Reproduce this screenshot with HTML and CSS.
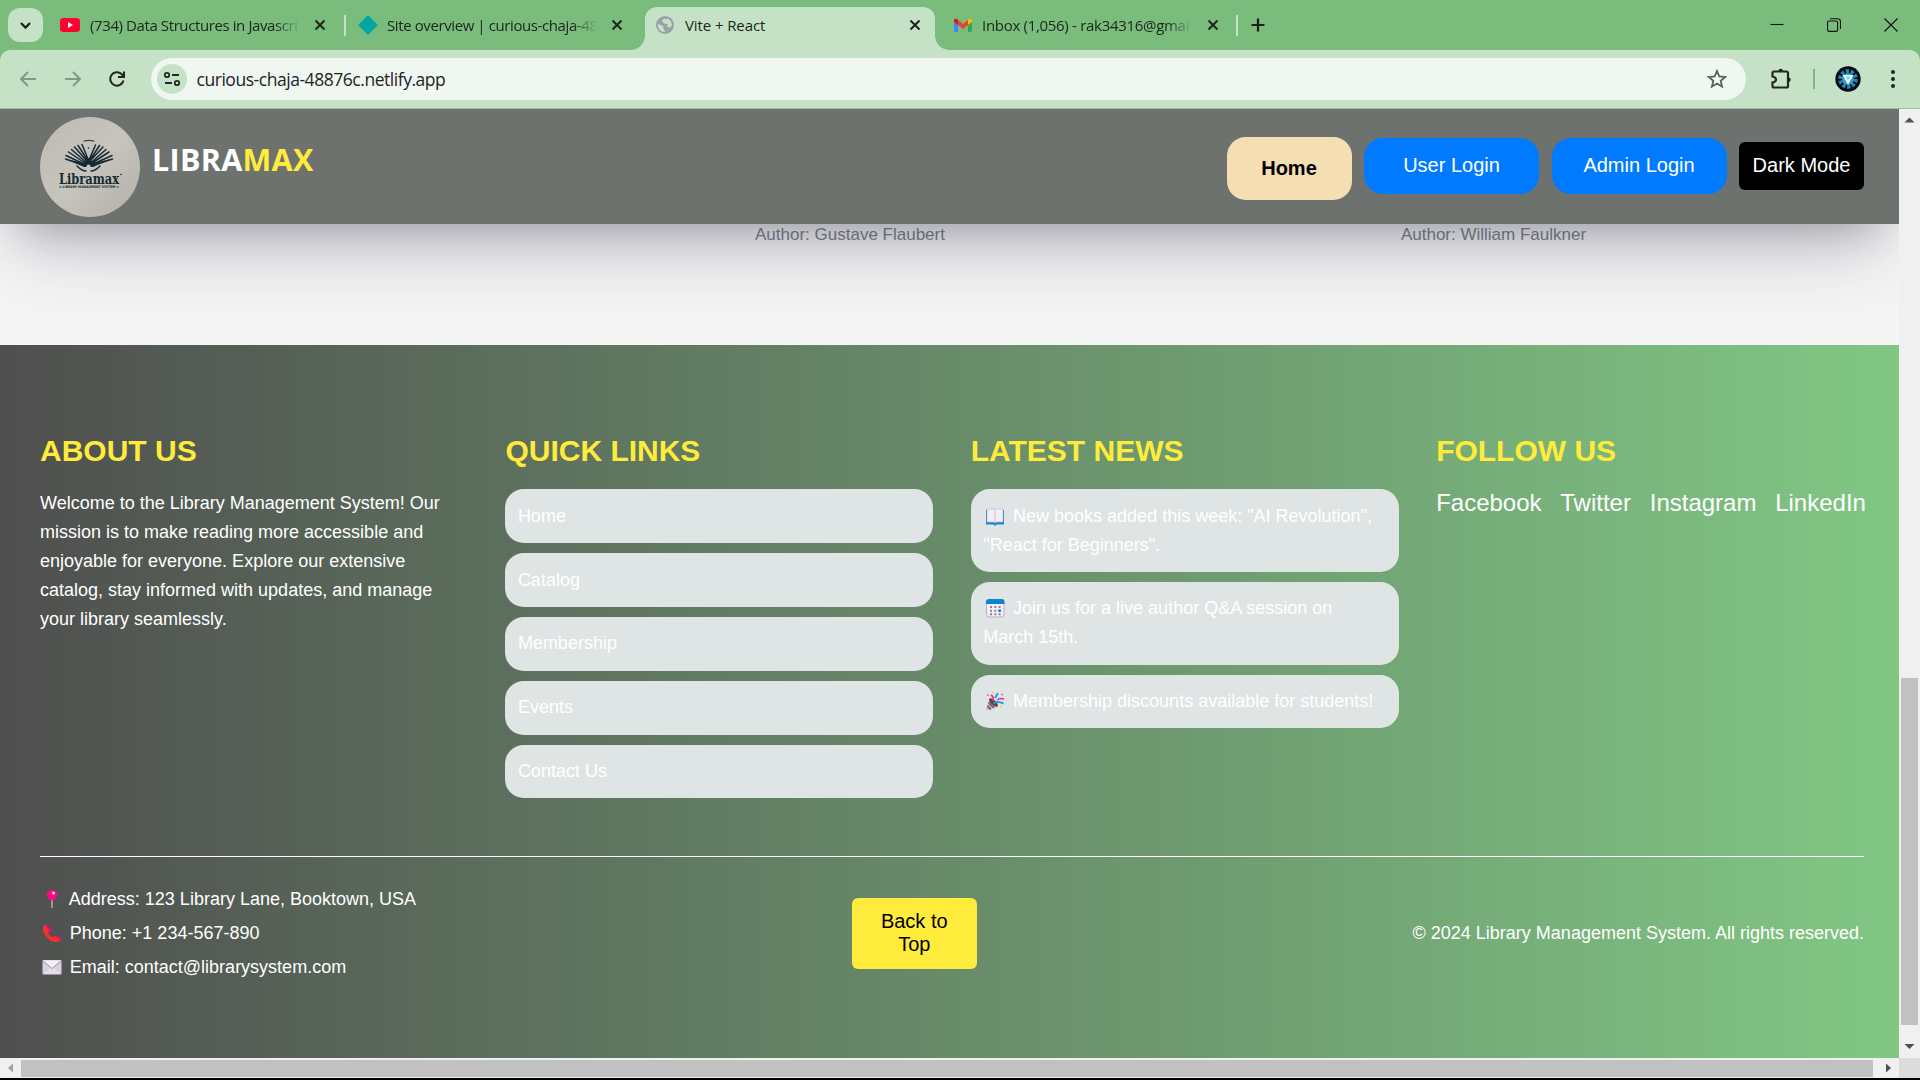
FILE: index.html
```html
<!DOCTYPE html>
<html lang="en">
<head>
<meta charset="utf-8">
<title>Vite + React</title>
<link rel="stylesheet" href="styles.css">
</head>
<body>
<div class="tabstrip">
  <div class="tab-search"><svg width="35" height="34" viewBox="0 0 35 34"><path d="M13 15l4.5 4.500 4.500-4.500" fill="none" stroke="#1d1f1d" stroke-width="2.300"/></svg></div>
  <div class="tab tab-video">
    <svg class="fav" width="20" height="14" viewBox="0 0 20 14"><rect width="20" height="14" rx="3.500" fill="#ff0033"/><path d="M8 4l5 3-5 3z" fill="#fff"/></svg>
    <span class="tab-title fade t1">(734) Data Structures in Javascri</span>
    <svg class="x" width="12" height="12" viewBox="0 0 12 12"><path d="M1.500 1.500l9 9m0-9l-9 9"/></svg>
  </div>
  <div class="tab tab-site">
    <svg class="fav" width="20" height="20" viewBox="0 0 20 20"><path d="M9 1q1-1 2 0l8 8q1 1 0 2l-8 8q-1 1-2 0l-8-8q-1-1 0-2z" fill="#05a5a1"/></svg>
    <span class="tab-title fade t2">Site overview | curious-chaja-48</span>
    <svg class="x" width="12" height="12" viewBox="0 0 12 12"><path d="M1.500 1.500l9 9m0-9l-9 9"/></svg>
  </div>
  <div class="tab tab-active">
    <svg class="fav" width="18" height="18" viewBox="0 0 18 18"><circle cx="9" cy="9" r="9" fill="#9aa0a6"/><path d="M2 8l5 2 .500 3 2 3q-6 .500-7.500-6zM8 2l-2 3 2 2.500 4 .500-1 3 3 .500 2-2q-.500-5-4-7l-2 1z" fill="#c5e2c6"/></svg>
    <span class="tab-title">Vite + React</span>
    <svg class="x" width="12" height="12" viewBox="0 0 12 12"><path d="M1.500 1.500l9 9m0-9l-9 9"/></svg>
  </div>
  <div class="tab tab-mail">
    <svg class="fav" width="18" height="14" viewBox="0 0 18 14"><path d="M0 3h4v11H1.500Q0 14 0 12.500z" fill="#4285f4"/><path d="M14 3h4v9.500q0 1.500-1.500 1.500H14z" fill="#34a853"/><path d="M4 2l5 4 5-4v5l-5 4-5-4z" fill="#ea4335"/><path d="M0 4V2Q.500-1 4 1.800V7z" fill="#c5221f"/><path d="M18 4V2q-.500-3-4-.200V7z" fill="#fbbc04"/></svg>
    <span class="tab-title fade t4">Inbox (1,056) - rak34316@gmai</span>
    <svg class="x" width="12" height="12" viewBox="0 0 12 12"><path d="M1.500 1.500l9 9m0-9l-9 9"/></svg>
  </div>
  <svg class="plus" width="14" height="14" viewBox="0 0 14 14"><path d="M7 .500v13M.500 7h13" stroke="#1d1f1d" stroke-width="2.200"/></svg>
  <div class="window-controls">
    <svg width="14" height="14" viewBox="0 0 14 14"><path d="M.500 6.500h13"/></svg>
    <svg width="14" height="14" viewBox="0 0 14 14"><rect x=".6" y="3" width="10" height="10.400" rx="1.500"/><path d="M3 .700h7.500q3 0 3 3V11"/></svg>
    <svg width="14" height="14" viewBox="0 0 14 14"><path d="M.500.500l13 13m0-13l-13 13"/></svg>
  </div>
</div>
<div class="toolbar-back">
<div class="toolbar">
  <svg class="nav dim" width="16" height="16" viewBox="0 0 16 16"><path d="M16 8H1.500M8 1L1 8l7 7"/></svg>
  <svg class="nav dim" width="16" height="16" viewBox="0 0 16 16"><path d="M0 8h14.500M8 1l7 7-7 7"/></svg>
  <svg class="nav" width="16" height="16" viewBox="0 0 16 16"><path d="M14.500 9.500A6.700 6.700 0 1 1 12.500 3l2 2.500M15 .500v5.500h-6"/></svg>
  <div class="omnibox">
    <div class="site-info"><svg width="18" height="16" viewBox="0 0 18 16"><g fill="none" stroke="#232623" stroke-width="1.800"><circle cx="4" cy="4" r="2.200"/><path d="M9 4h7M2 12h7"/><circle cx="14" cy="12" r="2.200"/></g></svg></div>
    <span class="url">curious-chaja-48876c.netlify.app</span>
    <svg class="star" width="20" height="20" viewBox="0 0 20 20"><path d="M10 2l2.300 5.500 6 .500-4.600 3.900 1.400 5.800-5.100-3.100-5.100 3.100 1.400-5.800L1.700 8l6-.500z" fill="none" stroke="#58605a" stroke-width="1.800"/></svg>
  </div>
  <svg class="ext" width="22" height="22" viewBox="0 0 22 22"><path d="M2.500 5q0-1.500 1.500-1.500h12.500q1.500 0 1.500 1.500v13q0 1.500-1.500 1.500H4q-1.500 0-1.500-1.500v-3.500q3.500-.800 3.500-3t-3.500-3z" fill="none" stroke="#232623" stroke-width="2.200"/><path d="M8.500 3a2.200 2.200 0 0 1 4.400 0zM18.500 9.500a2.200 2.200 0 0 1 0 4.400z" fill="#232623"/></svg>
  <div class="tool-sep"></div>
  <svg class="avatar" width="26" height="26" viewBox="0 0 26 26"><circle cx="13" cy="13" r="12.700" fill="#040b13"/><circle cx="13" cy="13" r="7.800" fill="none" stroke="#2786b4" stroke-width="4" stroke-dasharray="3.200 1.700"/><circle cx="13" cy="13" r="6" fill="#3c9cc8"/><path d="M7.500 9h11L13 18.500z" fill="#eaffff"/><path d="M10.500 10.500h5l-2.500 4.500z" fill="#7cd8ee"/></svg>
  <svg width="6" height="20" viewBox="0 0 6 20" fill="#232623"><circle cx="3" cy="3" r="2"/><circle cx="3" cy="10" r="2"/><circle cx="3" cy="17" r="2"/></svg>
</div>
</div>
<div class="viewport">
  <div class="page">
    <header class="header">
      <svg class="logo" width="100" height="100" viewBox="0 0 100 100">
        <defs><linearGradient id="paper" x1="0" y1="0" x2="1" y2="1"><stop offset="0" stop-color="#bdbab4"/><stop offset=".5" stop-color="#c6c4bd"/><stop offset="1" stop-color="#b2b0a8"/></linearGradient></defs>
        <circle cx="50" cy="50" r="50" fill="url(#paper)"/>
        <g fill="none" stroke="#172a32" stroke-width="1.500" stroke-linecap="round">
          <path d="M44 24q5-1.500 10 0" stroke-width="1"/>
          <path d="M46 49L25.500 42M46 48L26 38.500M46.500 47L28.500 35M47 46L31.500 32.500M47 44L34.500 30M47.500 43L38 28.500M48 42L42 27.500"/>
          <path d="M51 49l21.500-7M51 48l21-9.500M50.500 47L69 35M50.500 46L66 32.500M50 44l13-14M50 43l9.500-14.500M49.500 42l6-14"/>
          <path d="M37 49q5 5 9 5M60 49q-5 5-9 5"/>
        </g>
        <path d="M26 42l17 4 5.500-5 5.500 5 17-4-18 8h-9z" fill="#172a32"/><circle cx="48.500" cy="49.500" r="2" fill="#c6c4bd"/><circle cx="48.500" cy="31" r=".8" fill="#172a32"/>
        <text class="logo-word" x="19" y="67" textLength="60" lengthAdjust="spacingAndGlyphs">Libramax</text>
        <circle cx="81" cy="57.500" r=".8" fill="#172a32"/>
        <text class="logo-sub" x="19" y="71.300" textLength="60" lengthAdjust="spacingAndGlyphs">≡ LIBRARY MANAGMENT SYSTEM ≡</text>
      </svg>
      <div class="brand">LIBRA<span>MAX</span></div>
      <nav class="menu">
        <a class="btn home">Home</a>
        <a class="btn login">User Login</a>
        <a class="btn login">Admin Login</a>
        <a class="btn dark">Dark Mode</a>
      </nav>
    </header>
    <main class="books"><p>Author: Gustave Flaubert</p><p>Author: William Faulkner</p></main>
    <footer class="footer">
      <div class="columns">
        <section><h2>ABOUT US</h2><p class="about">Welcome to the Library Management System! Our mission is to make reading more accessible and enjoyable for everyone. Explore our extensive catalog, stay informed with updates, and manage your library seamlessly.</p></section>
        <section><h2>QUICK LINKS</h2><ul><li>Home</li><li>Catalog</li><li>Membership</li><li>Events</li><li>Contact Us</li></ul></section>
        <section><h2>LATEST NEWS</h2><ul>
          <li><svg class="emoji" width="24" height="20" viewBox="0 0 24 20"><path d="M3 4h18v14.500h-7.500L12 20l-1.500-1.500H3z" fill="#1689cf"/><path d="M4 3h7q1 0 1 1 0-1 1-1h7v13h-7l-1 1-1-1H4z" fill="#f3eef8" stroke="#bfb2ce" stroke-width=".6"/><path d="M12 4v13" stroke="#c9bdd6"/></svg> New books added this week: "AI Revolution", "React for Beginners".</li>
          <li><svg class="emoji" width="24" height="20" viewBox="0 0 24 20"><rect x="3.500" y="1.500" width="17.500" height="17.500" rx="3" fill="#f5effa" stroke="#b9aec5"/><path d="M3 6V4q0-3 3-3h12.500q3 0 3 3v2z" fill="#0c82d2"/><g fill="#8d80a0"><path d="M7 8h2v2H7zM11.300 8h2v2h-2zM15.600 8h2v2h-2zM7 11.700h2v2H7zM11.300 11.700h2v2h-2zM7 15.300h2v2H7zM11.300 15.300h2v2h-2zM15.600 15.300h2v2h-2z"/></g><path d="M15.300 11.400h2.600V14h-2.600z" fill="#0c82d2"/></svg> Join us for a live author Q&amp;A session on March 15th.</li>
          <li><svg class="emoji" width="24" height="20" viewBox="0 0 24 20"><path d="M6.500 8l8 7-10 4q-1.500 0-1-1.500z" fill="#f7b63e"/><path d="M5.500 11.500l5.500 5.500M4.300 15l3.500 3.500" stroke="#5b5bdc" stroke-width="1.800"/><ellipse cx="10.500" cy="11.500" rx="2.400" ry="5.600" transform="rotate(-46 10.500 11.500)" fill="#673f38"/><path d="M10 10q1-4-2-6" stroke="#e92b91" stroke-width="1.700" fill="none"/><path d="M12 7l3-5M10.500 12.500q4-3 10 0" stroke="#18a0ec" stroke-width="2" fill="none"/><path d="M14 9q3-2.500 7-1" stroke="#e92b91" stroke-width="1.500" fill="none"/><g fill="#f8ca4c"><circle cx="10" cy="1.500" r="1"/><circle cx="18" cy="15.500" r="1"/></g><circle cx="19" cy="3.500" r="1" fill="#f45aa7"/><circle cx="5" cy="4" r="1" fill="#f45aa7"/></svg> Membership discounts available for students!</li>
        </ul></section>
        <section><h2>FOLLOW US</h2><div class="social"><a>Facebook</a><a>Twitter</a><a>Instagram</a><a>LinkedIn</a></div></section>
      </div>
      <div class="bottom">
        <div class="contact">
          <p><svg class="emoji" width="24" height="20" viewBox="0 0 24 20"><path d="M12 9v10" stroke="#b9b5bd" stroke-width="1.400"/><circle cx="12" cy="6" r="5.200" fill="#fc0b85"/><circle cx="13.500" cy="4" r="1.500" fill="#ffd0e8"/></svg> Address: 123 Library Lane, Booktown, USA</p>
          <p><svg class="emoji" width="24" height="20" viewBox="0 0 24 20"><path d="M6 2l5 5-2 2M15 15l2-2 4 4" fill="none" stroke="#bd1a83" stroke-width="2.500"/><path d="M4.500 1.500l5 6-1.500 2q1.500 3.500 5 5l2-1.500 5.500 4q-1 2-5 2Q10 18.500 6 13.500T3.500 3z" fill="#f8312f"/></svg> Phone: +1 234-567-890</p>
          <p><svg class="emoji" width="24" height="20" viewBox="0 0 24 20"><rect x="2.500" y="3" width="19" height="14.500" rx="1" fill="#d8cfe2"/><path d="M3 17l7-6h4l7 6" fill="#e5ddec"/><path d="M3 3.500h18l-9 8z" fill="#f4eff8"/><path d="M3 4l9 7.500L21 4" fill="none" stroke="#998ba8" stroke-width=".9"/></svg> Email: contact@librarysystem.com</p>
        </div>
        <a class="top">Back to Top</a>
        <p class="copy">© 2024 Library Management System. All rights reserved.</p>
      </div>
    </footer>
  </div>
  <div class="vscroll"><svg width="21" height="21" viewBox="0 0 21 21"><path d="M5.500 13.500h10l-5-5z" fill="#505050"/></svg><div class="vthumb"></div><svg width="21" height="21" viewBox="0 0 21 21"><path d="M5.500 7h10l-5 5z" fill="#505050"/></svg></div>
</div>
<div class="hscroll"><svg width="21" height="20" viewBox="0 0 21 20"><path d="M13 5.500v9L8 10z" fill="#a3a3a3"/></svg><div class="hthumb"></div><svg width="26" height="20" viewBox="0 0 26 20"><path d="M13 5.500v9l5-4.500z" fill="#505050"/></svg><div class="corner"></div></div>
</body>
</html>
```
FILE: styles.css
```css
* { box-sizing: border-box; }
body { margin: 0; width: 1920px; height: 1080px; overflow: hidden; background: #000; font-family: "Liberation Sans", Arial, sans-serif; display: flex; flex-direction: column; }
svg { display: block; flex: none; }
p, h2, ul { margin: 0; padding: 0; }

/* Tab strip */
.tabstrip { height: 50px; flex: none; display: flex; background: #79bc7c; padding-left: 8px; font: 15px "Open Sans", "Noto Sans", sans-serif; color: #1d241e; }
.tab-search { width: 35px; height: 34px; margin-top: 8px; border-radius: 12px; background: #c5e2c6; }
.tab { display: flex; align-items: center; height: 50px; position: relative; }
.tab .x { margin-left: auto; fill: none; stroke: #1d241e; stroke-width: 2; }
.tab-title { margin-left: 10px; white-space: nowrap; letter-spacing: -.4px; }
.fade { -webkit-mask-image: linear-gradient(90deg, #000 88%, transparent); mask-image: linear-gradient(90deg, #000 88%, transparent); }
.tab-video { width: 303px; padding: 0 20px 0 17px; }
.tab-site { width: 299px; padding: 0 22px 0 12px; }
.tab-site .tab-title { margin-left: 9px; }
.tab-active { width: 290px; height: 43px; margin-top: 7px; padding: 0 14px 7px 11px; border-radius: 12px 12px 0 0; background: #c5e2c6; }
.tab-active .tab-title { margin-left: 11px; letter-spacing: -.1px; }
.tab-active::before, .tab-active::after { content: ""; position: absolute; bottom: 0; width: 14px; height: 14px; }
.tab-active::before { left: -14px; background: radial-gradient(circle at 0 0, transparent 13.5px, #c5e2c6 14px); }
.tab-active::after { right: -14px; background: radial-gradient(circle at 100% 0, transparent 13.5px, #c5e2c6 14px); }
.tab-mail { width: 303px; padding: 0 19px; }
.tab-mail .tab-title { letter-spacing: -.3px; }
.tab-video::after, .tab-mail::after { content: ""; position: absolute; right: 0; top: 15px; width: 2px; height: 21px; background: #c5e2c6; }
.t1, .t2, .t4 { width: 210px; }
.plus { margin: 18px 0 0 13px; }
.window-controls { margin: 18px 22px 0 auto; display: flex; gap: 43px; fill: none; stroke: #111; stroke-width: 1.1; }

/* Toolbar */
.toolbar-back { background: #79bc7c; flex: none; }
.toolbar { height: 59px; background: #c5e2c6; border-radius: 10px 10px 0 0; border-bottom: 1px solid #a2b9a3; display: flex; align-items: center; padding: 0 24px 0 20px; }
.nav { margin-right: 28.5px; fill: none; stroke: #232623; stroke-width: 2; }
.nav.dim { stroke: #849985; }
.omnibox { width: 1597px; height: 42px; margin-left: -3px; border-radius: 21px; background: #f0f7f1; display: flex; align-items: center; padding: 0 19px 0 6px; }
.site-info { width: 30px; height: 30px; border-radius: 50%; background: #c5e2c6; display: flex; align-items: center; justify-content: center; }
.url { margin-left: 10px; font: 17.500px "Open Sans", "Noto Sans", sans-serif; letter-spacing: -.46px; color: #1d241e; }
.star { margin-left: auto; }
.ext { margin-left: 24px; }
.tool-sep { width: 2px; height: 20px; margin: 0 20px 0 21px; background: #79bc7c; }
.avatar { margin-right: 29px; }

/* Page */
.viewport { height: 949px; flex: none; display: flex; }
.page { width: 1899px; position: relative; background: #f5f5f5; overflow: hidden; display: flex; flex-direction: column; }
.header { height: 115px; flex: none; position: relative; z-index: 1; background: #6d726e; display: flex; padding: 8px 35px 0 40px; box-shadow: rgba(50,50,93,.25) 0 37.5px 75px -15px, rgba(0,0,0,.3) 0 22.5px 45px -22.5px; }
.logo { overflow: visible; }
.logo-word { font: bold 15px "DejaVu Serif", serif; fill: #172a32; }
.logo-sub { font: bold 3.500px "DejaVu Sans", sans-serif; fill: #172a32; }
.brand { margin: 21px 0 0 12px; font: bold 30.500px/42px "Open Sans", "Noto Sans", sans-serif; letter-spacing: .3px; color: #fff; }
.brand span { color: #ffeb3b; }
.menu { margin-left: auto; display: flex; align-items: flex-start; gap: 12.500px; font-size: 20px; }
.btn { text-align: center; border-radius: 18.750px; }
.home { width: 125px; height: 63px; margin-top: 20px; line-height: 62px; background: #f5deb3; color: #000; font-weight: bold; }
.login { width: 175px; height: 56px; margin-top: 21px; line-height: 54px; background: #007bff; color: #fff; }
.dark { width: 125px; height: 48px; margin-top: 25px; line-height: 46px; border-radius: 6px; background: #000; color: #fff; }
.books { height: 121px; flex: none; display: flex; gap: 456px; padding: 1px 0 0 755px; font-size: 17px; line-height: 20px; color: #7a838b; white-space: nowrap; }

/* Footer */
.footer { flex: 1; position: relative; z-index: 2; background: linear-gradient(90deg, #4f4f4f, #81c784); color: #fff; font-size: 18px; line-height: 28.800px; padding: 82.400px 35px 0 40px; }
.columns { display: grid; grid-template-columns: repeat(4, minmax(0, 1fr)); gap: 37.500px; height: 429.600px; border-bottom: 1px solid #fff; }
h2 { font-size: 30px; line-height: 48px; color: #ffeb3b; margin-bottom: 14px; }
.about { width: 410px; }
ul { list-style: none; }
li { padding: 12.500px; margin-bottom: 10px; border-radius: 18.750px; background: #dfe5e5; }
.emoji { display: inline-block; vertical-align: -4px; margin-right: .8px; }
.social { display: flex; gap: 18.750px; font-size: 24px; white-space: nowrap; }
.bottom { display: flex; justify-content: space-between; align-items: center; height: 153px; }
.contact p { line-height: 34px; }
.top { width: 125px; height: 71px; padding: 12px 20px; border-radius: 6px; background: #ffeb3b; color: #000; font-size: 20px; line-height: 23px; text-align: center; }
.copy { text-align: right; white-space: nowrap; }

/* Scroll bars */
.vscroll { width: 21px; background: #f0f0f0; display: flex; flex-direction: column; justify-content: space-between; }
.vthumb { width: 17px; height: 347px; margin: 536px 2px 0; background: #c1c1c1; }
.hscroll { height: 20px; flex: none; display: flex; align-items: center; background: #f0f0f0; }
.hthumb { width: 1852px; height: 17px; background: #c1c1c1; }
.corner { width: 21px; height: 20px; background: #dcdcdc; }
```
